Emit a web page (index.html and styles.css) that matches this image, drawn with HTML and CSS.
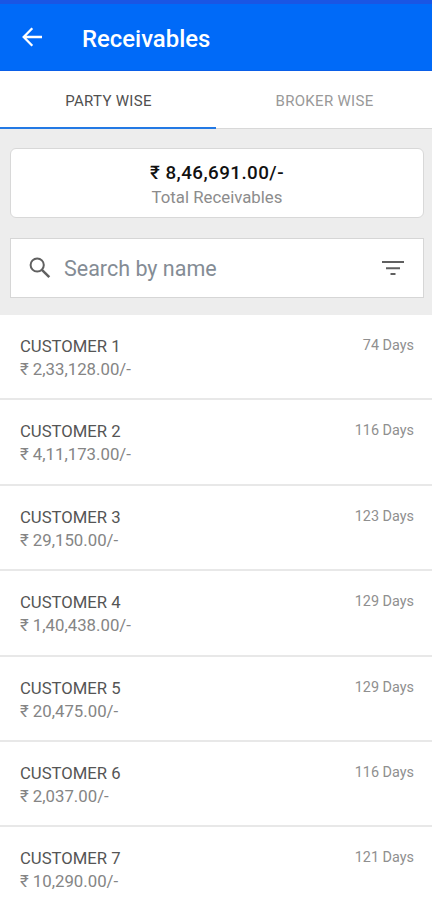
FILE: index.html
```html
<!DOCTYPE html>
<html lang="en">
<head>
<meta charset="utf-8">
<title>Receivables</title>
<link rel="stylesheet" href="styles.css">
</head>
<body>
<div class="status"></div>
<header class="bar">
  <svg class="back" width="20" height="20" viewBox="0 0 20 20" fill="none" stroke="#fff" stroke-width="2.3"><path d="M20 10H2M10.3 1.3L1.7 10l8.6 8.7"/></svg>
  <h1 class="title"><span>Receivables</span></h1>
</header>
<nav class="tabs">
  <div class="tab active"><span>PARTY WISE</span></div>
  <div class="tab"><span>BROKER WISE</span></div>
</nav>
<section class="top">
  <div class="total">
    <div class="sum"><span>₹ 8,46,691.00/-</span></div>
    <div class="label"><span>Total Receivables</span></div>
  </div>
  <div class="search">
    <svg width="22" height="22" viewBox="0 0 22 22" fill="none" stroke="#606060" stroke-width="2"><circle cx="8.2" cy="8" r="6.6"/><path d="M12.9 12.8l7.4 7.4" stroke-width="2.5"/></svg>
    <div class="hint"><span>Search by name</span></div>
    <svg class="filter" width="22" height="16" viewBox="0 0 22 16" fill="#606060"><path d="M0 1h22v2H0zM4 7.2h14v2H4zM8.5 13h5v2h-5z"/></svg>
  </div>
</section>
<main class="list">
  <div class="row"><div><div class="name"><span>CUSTOMER 1</span></div><div class="amount"><span>₹ 2,33,128.00/-</span></div></div><div class="days"><span>74 Days</span></div></div>
  <div class="row"><div><div class="name"><span>CUSTOMER 2</span></div><div class="amount"><span>₹ 4,11,173.00/-</span></div></div><div class="days"><span>116 Days</span></div></div>
  <div class="row"><div><div class="name"><span>CUSTOMER 3</span></div><div class="amount"><span>₹ 29,150.00/-</span></div></div><div class="days"><span>123 Days</span></div></div>
  <div class="row"><div><div class="name"><span>CUSTOMER 4</span></div><div class="amount"><span>₹ 1,40,438.00/-</span></div></div><div class="days"><span>129 Days</span></div></div>
  <div class="row"><div><div class="name"><span>CUSTOMER 5</span></div><div class="amount"><span>₹ 20,475.00/-</span></div></div><div class="days"><span>129 Days</span></div></div>
  <div class="row"><div><div class="name"><span>CUSTOMER 6</span></div><div class="amount"><span>₹ 2,037.00/-</span></div></div><div class="days"><span>116 Days</span></div></div>
  <div class="row"><div><div class="name"><span>CUSTOMER 7</span></div><div class="amount"><span>₹ 10,290.00/-</span></div></div><div class="days"><span>121 Days</span></div></div>
</main>
</body>
</html>
```
FILE: styles.css
```css
* { box-sizing: border-box; }
body {
  margin: 0;
  height: 900px;
  overflow: hidden;
  background: #fff;
  font-family: Roboto, "Liberation Sans", sans-serif;
}
.status { height: 4px; background: #1a56e4; }
.bar {
  height: 67px;
  padding: 4px 0 0 22px;
  display: flex;
  align-items: center;
  background: #006af8;
  border-bottom: 1px solid #0a5fe8;
}
.back { margin-top: -4px; }
.title {
  margin: -1px 0 0 40px;
  color: #fff;
  font-size: 23.9px;
  font-weight: 500;
  line-height: 28px;
}
.tabs {
  height: 58px;
  display: flex;
  background: #fff;
}
.tab {
  flex: 1;
  padding: 21px 0 0 1px;
  text-align: center;
  font-size: 15px;
  letter-spacing: 0.3px;
  line-height: 18px;
  color: #999;
  border-bottom: 1px solid #d8d8d8;
}
.tab.active { color: #505050; border-bottom: 2px solid #2379e4; }
.top {
  height: 186px;
  padding: 19px 8px 0 10px;
  background: #ededed;
}
.total {
  height: 70px;
  padding-top: 13px;
  text-align: center;
  background: #fff;
  border: 1px solid #d8d8d8;
  border-radius: 6px;
}
.sum { font-size: 18.8px; letter-spacing: 0.45px; line-height: 22px; font-weight: 500; color: #111; }
.label { margin-top: 3px; font-size: 16.8px; line-height: 20px; color: #8c8c8c; }
.search {
  height: 60px;
  margin-top: 20px;
  padding: 0 19px 0 18px;
  display: flex;
  align-items: center;
  background: #fff;
  border: 1px solid #d6d6d6;
}
.hint {
  flex: 1;
  margin-left: 13px;
  padding-top: 1px;
  font-size: 21.5px;
  line-height: 28px;
  color: #848c95;
}
.row {
  height: 85.4px;
  padding: 22px 18px 0 20px;
  display: flex;
  justify-content: space-between;
  border-bottom: 2px solid #e8e8e8;
}
.name { font-size: 16.7px; line-height: 20px; color: #555; }
.amount { margin-top: 2px; font-size: 16.8px; line-height: 20px; color: #858585; }
.days { font-size: 14.4px; line-height: 18px; color: #8f8f8f; }
```
